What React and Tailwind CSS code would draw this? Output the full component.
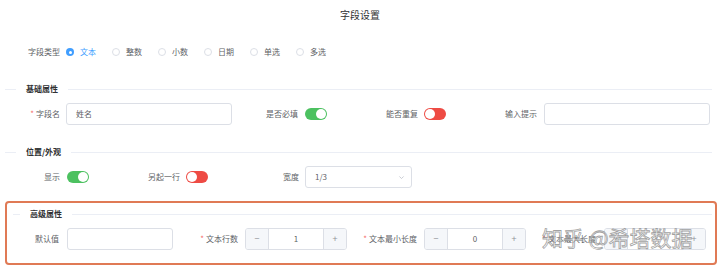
import React from "react";

const F = { fontFamily: '"Noto Sans CJK SC", "Noto Sans", sans-serif' };

function Label({ w, star, children }) {
  return (
    <div className={`${w} shrink-0 flex justify-end items-center text-[8px] text-[#606266] leading-none whitespace-nowrap`}>
      {star && <span className="shrink-0 text-[#f56c6c] mr-[2px]">*</span>}
      <span className="shrink-0">{children}</span>
    </div>
  );
}

function Toggle({ on }) {
  return (
    <div
      className={`w-[22px] h-[12px] rounded-full shrink-0 flex items-center px-[1px] ${
        on ? "bg-[#4cc160] justify-end" : "bg-[#ee4b44] justify-start"
      }`}
    >
      <div className="w-[10px] h-[10px] rounded-full bg-white" />
    </div>
  );
}

function Input({ w, value }) {
  return (
    <div className={`${w} h-[22px] shrink-0 border border-[#dcdfe6] rounded-[3px] bg-white flex items-center pl-[9px] text-[8px] text-[#606266]`}>
      {value}
    </div>
  );
}

function NumberInput({ value }) {
  return (
    <div className="w-[102px] h-[22px] shrink-0 border border-[#dcdfe6] rounded-[3px] bg-white flex text-[8px] text-[#606266] overflow-hidden">
      <div className="w-[23px] bg-[#f5f7fa] border-r border-[#dcdfe6] flex items-center justify-center text-[#909399] text-[9px]">−</div>
      <div className="flex-1 flex items-center justify-center">{value}</div>
      <div className="w-[23px] bg-[#f5f7fa] border-l border-[#dcdfe6] flex items-center justify-center text-[#909399] text-[9px]">+</div>
    </div>
  );
}

function Divider({ title, leftW, ml }) {
  return (
    <div className={`h-[16px] flex items-center ${ml}`}>
      <div className={`${leftW} h-px bg-[#ebeef5]`} />
      <div className="px-[10px] text-[8px] font-semibold text-[#303133] leading-none whitespace-nowrap">{title}</div>
      <div className="flex-1 h-px bg-[#ebeef5]" />
    </div>
  );
}

function Radio({ label, checked }) {
  return (
    <div className="w-[46px] flex items-center shrink-0">
      {checked ? (
        <div className="w-[8px] h-[8px] rounded-full bg-[#409eff] flex items-center justify-center">
          <div className="w-[3px] h-[3px] rounded-full bg-white" />
        </div>
      ) : (
        <div className="w-[8px] h-[8px] rounded-full border border-[#dcdfe6] bg-white" />
      )}
      <span className={`ml-[6px] text-[8px] leading-none ${checked ? "text-[#409eff]" : "text-[#606266]"}`}>{label}</span>
    </div>
  );
}

export default function App() {
  return (
    <div className="w-[720px] h-[276px] bg-white relative overflow-hidden" style={F}>
      <div className="h-[28px] flex items-center justify-center text-[10px] text-[#303133]">字段设置</div>

      <div className="mt-[13px] h-[22px] flex items-center pl-[28px]">
        <div className="w-[38px] text-[8px] text-[#606266] leading-none">字段类型</div>
        <Radio label="文本" checked />
        <Radio label="整数" />
        <Radio label="小数" />
        <Radio label="日期" />
        <Radio label="单选" />
        <Radio label="多选" />
      </div>

      <div className="pl-[5px] pr-[8px]">
        <div className="mt-[18px]">
          <Divider title="基础属性" leftW="w-[11px]" ml="" />
        </div>
        <div className="mt-[6px] h-[22px] flex items-center">
          <div className="w-[238px] flex items-center">
            <Label w="w-[55px]" star>字段名</Label>
            <div className="w-[6px]" />
            <Input w="w-[166px]" value="姓名" />
          </div>
          <div className="w-[120px] flex items-center">
            <Label w="w-[55px]">是否必填</Label>
            <div className="w-[7px]" />
            <Toggle on />
          </div>
          <div className="w-[119px] flex items-center">
            <Label w="w-[55px]">能否重复</Label>
            <div className="w-[6px]" />
            <Toggle />
          </div>
          <div className="flex items-center">
            <Label w="w-[55px]">输入提示</Label>
            <div className="w-[7px]" />
            <Input w="w-[166px]" value="" />
          </div>
        </div>

        <div className="mt-[19px]">
          <Divider title="位置/外观" leftW="w-[11px]" ml="" />
        </div>
        <div className="mt-[6px] h-[22px] flex items-center">
          <div className="w-[120px] flex items-center">
            <Label w="w-[55px]">显示</Label>
            <div className="w-[7px]" />
            <Toggle on />
          </div>
          <div className="w-[119px] flex items-center">
            <Label w="w-[55px]">另起一行</Label>
            <div className="w-[6px]" />
            <Toggle />
          </div>
          <div className="flex items-center">
            <Label w="w-[55px]">宽度</Label>
            <div className="w-[6px]" />
            <div className="w-[107px] h-[22px] border border-[#dcdfe6] rounded-[3px] flex items-center justify-between pl-[9px] pr-[6px] text-[8px] text-[#606266]">
              <span>1/3</span>
              <svg width="7" height="7" viewBox="0 0 10 10" fill="none">
                <path d="M2 3.5 L5 6.5 L8 3.5" stroke="#c0c4cc" strokeWidth="1.2" />
              </svg>
            </div>
          </div>
        </div>
      </div>

      <div className="mt-[13px] ml-[5px] w-[712px] border-2 border-[#e07a55] rounded-[4px] pt-[3px] pb-[13px] pr-[3px]">
        <Divider title="高级属性" leftW="w-[7px]" ml="ml-[6px]" />
        <div className="mt-[6px] h-[22px] flex items-center">
          <div className="w-[179px] flex items-center">
            <Label w="w-[52px]">默认值</Label>
            <div className="w-[8px]" />
            <Input w="w-[106px]" value="" />
          </div>
          <div className="w-[179px] flex items-center">
            <Label w="w-[52px]" star>文本行数</Label>
            <div className="w-[7px]" />
            <NumberInput value="1" />
          </div>
          <div className="w-[179px] flex items-center">
            <Label w="w-[52px]" star>文本最小长度</Label>
            <div className="w-[7px]" />
            <NumberInput value="0" />
          </div>
          <div className="flex items-center">
            <Label w="w-[52px]" star>文本最大长度</Label>
            <div className="w-[8px]" />
            <NumberInput value="" />
          </div>
        </div>
      </div>

      <div className="absolute left-[542px] top-[227px] text-[21px] leading-none whitespace-nowrap text-white/60 [-webkit-text-stroke:0.8px_rgba(130,130,130,0.75)]">
        知乎 @希塔数据
      </div>
    </div>
  );
}
